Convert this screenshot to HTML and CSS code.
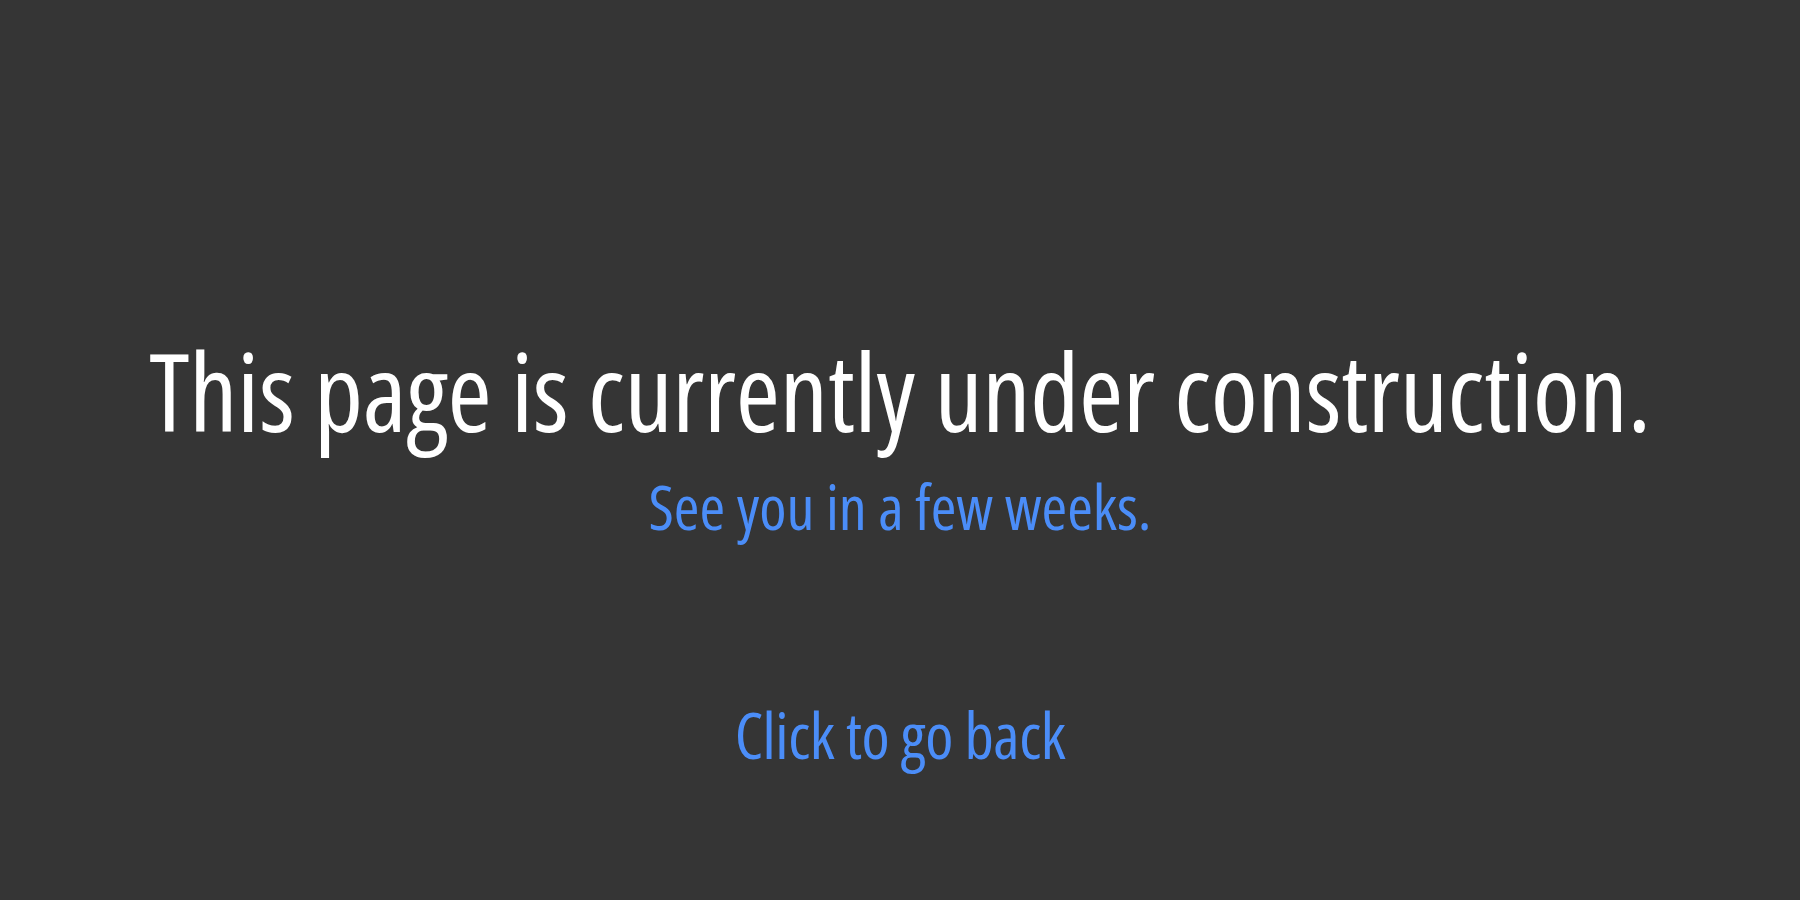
FILE: index.html
```html
<!DOCTYPE html>
<html lang="en">
<head>
<meta charset="utf-8">
<title>Under construction</title>
<link rel="stylesheet" href="styles.css">
</head>
<body>
<main class="page">
  <h1 class="headline">This page is currently under construction.</h1>
  <p class="subline">See you in a few weeks.</p>
  <a class="back" href="#">Click to go back</a>
</main>
</body>
</html>
```
FILE: styles.css
```css
html, body {
  margin: 0;
  height: 100%;
  background: #353535;
}
body {
  font-family: "Open Sans", "Noto Sans", sans-serif;
  font-stretch: 75%;
}
.page {
  display: flex;
  flex-direction: column;
  align-items: center;
  padding-top: 337px;
  box-sizing: border-box;
  height: 100%;
}
.headline {
  margin: 0;
  font-size: 107px;
  line-height: 1;
  font-weight: 400;
  color: #ffffff;
  letter-spacing: -0.3px;
  white-space: nowrap;
}
.subline {
  margin: 31px 0 0;
  font-size: 62px;
  line-height: 1;
  color: #4b8df8;
  letter-spacing: 0;
}
.back {
  margin-top: 166px;
  font-size: 64px;
  line-height: 1;
  color: #4b8df8;
  text-decoration: none;
  letter-spacing: -0.4px;
}
```
